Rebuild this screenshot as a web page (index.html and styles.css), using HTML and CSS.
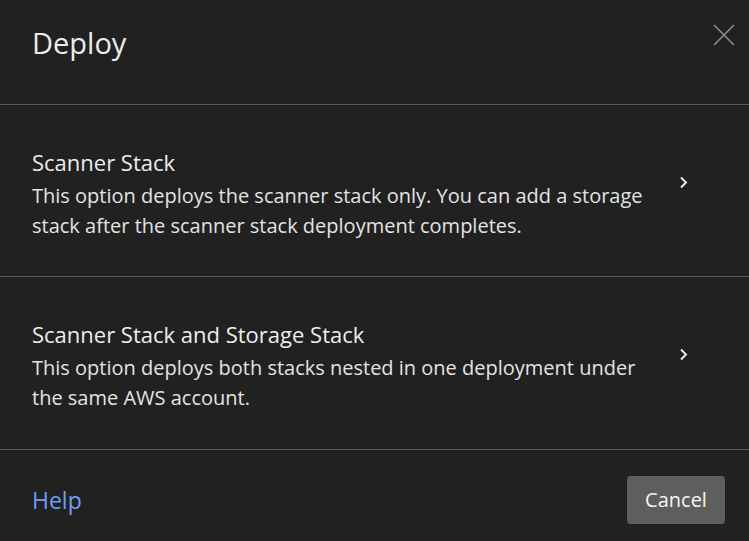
FILE: index.html
```html
<!DOCTYPE html>
<html>
<head>
<meta charset="utf-8">
<link rel="stylesheet" href="styles.css">
</head>
<body>
<div class="dialog">
  <div class="header">
    <h1 class="title">Deploy</h1>
    <button class="close" aria-label="Close">
      <svg width="22" height="22" viewBox="0 0 22 22"><path d="M1 1L21 21M21 1L1 21" stroke="#8c8c8c" stroke-width="1.6" fill="none"/></svg>
    </button>
  </div>
  <div class="option">
    <div class="option-text">
      <div class="option-title">Scanner Stack</div>
      <div class="option-desc">This option deploys the scanner stack only. You can add a storage stack after the scanner stack deployment completes.</div>
    </div>
    <svg class="chevron" width="9" height="13" viewBox="0 0 9 13"><path d="M2 1.5L7 6.5L2 11.5" stroke="#f0f0f0" stroke-width="1.9" fill="none"/></svg>
  </div>
  <div class="option option-last">
    <div class="option-text">
      <div class="option-title">Scanner Stack and Storage Stack</div>
      <div class="option-desc">This option deploys both stacks nested in one deployment under the same AWS account.</div>
    </div>
    <svg class="chevron" width="9" height="13" viewBox="0 0 9 13"><path d="M2 1.5L7 6.5L2 11.5" stroke="#f0f0f0" stroke-width="1.9" fill="none"/></svg>
  </div>
  <div class="footer">
    <a class="help" href="#">Help</a>
    <button class="cancel">Cancel</button>
  </div>
</div>
</body>
</html>
```
FILE: styles.css
```css
html, body {
  margin: 0;
  padding: 0;
  background: #212121;
}
.dialog {
  width: 749px;
  height: 541px;
  background: #212121;
  font-family: "Open Sans", "Noto Sans", sans-serif;
  color: #e6e6e6;
  display: flex;
  flex-direction: column;
}
.header {
  height: 104px;
  border-bottom: 1px solid #5a5a5a;
  display: flex;
  justify-content: space-between;
  align-items: flex-start;
  padding-left: 32px;
}
.title {
  margin: 24px 0 0 0;
  font-size: 29px;
  font-weight: 400;
  color: #ececec;
  line-height: 38px;
}
.close {
  margin: 24px 14px 0 0;
  background: none;
  border: none;
  padding: 0;
  width: 22px;
  height: 22px;
}
.option {
  height: 172px;
  box-sizing: border-box;
  border-bottom: 1px solid #5a5a5a;
  display: flex;
  align-items: center;
  padding: 6px 32px 0 32px;
}
.option-last {
  height: 173px;
}
.option-text {
  width: 620px;
}
.option-title {
  font-size: 22px;
  line-height: 30px;
  color: #ededed;
}
.option-desc {
  font-size: 20px;
  line-height: 30px;
  color: #e3e3e3;
  margin-top: 4px;
}
.chevron {
  align-self: flex-start;
  margin-top: 65px;
  margin-left: 27px;
}
.footer {
  flex: 1;
  display: flex;
  justify-content: space-between;
  align-items: center;
  padding: 8px 24px 0 32px;
}
.help {
  color: #6e9ef5;
  text-decoration: none;
  font-size: 23px;
}
.cancel {
  width: 98px;
  height: 48px;
  background: #5e5e5e;
  border: none;
  border-radius: 4px;
  color: #f5f5f5;
  font-family: inherit;
  font-size: 20px;
  padding: 0;
}
```
